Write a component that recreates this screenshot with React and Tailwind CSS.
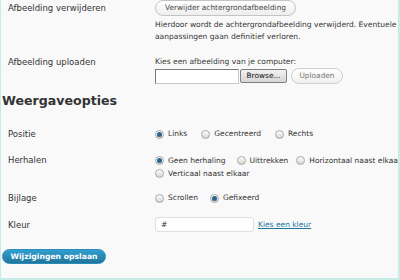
import React from "react";

function Radio({ checked }) {
  return (
    <span className="relative inline-flex h-[9px] w-[9px] shrink-0 items-center justify-center rounded-full border border-[#a8a8a8] bg-gradient-to-b from-[#ffffff] to-[#d4d4d4]">
      {checked && <span className="h-[5px] w-[5px] rounded-full bg-[#2a6491]" />}
    </span>
  );
}

function Opt({ checked, label, className = "" }) {
  return (
    <span className={"inline-flex shrink-0 items-center gap-[4px] " + className}>
      <Radio checked={checked} />
      <span>{label}</span>
    </span>
  );
}

export default function App() {
  return (
    <div className="relative h-[280px] w-[400px] overflow-hidden whitespace-nowrap border-b-2 border-l border-r-2 border-[#c6ece6] bg-[#f9f9f9] font-['DejaVu_Sans',sans-serif] text-[#333]">
      {/* Row: Afbeelding verwijderen */}
      <div className="flex">
        <div className="w-[154px] shrink-0 pl-[7px] text-[8.5px] leading-[16px]">Afbeelding verwijderen</div>
        <div className="flex flex-col items-start">
          <div className="flex h-[16px] w-[141px] items-center justify-center rounded-full border border-[#c4c4c4] bg-gradient-to-b from-[#ffffff] to-[#eeeeee] text-[7.4px] text-[#464646]">
            Verwijder achtergrondafbeelding
          </div>
          <div className="mt-[3px] text-[7.55px] leading-[12px]">
            Hierdoor wordt de achtergrondafbeelding verwijderd. Eventuele
            <br />
            aanpassingen gaan definitief verloren.
          </div>
        </div>
      </div>

      {/* Row: Afbeelding uploaden */}
      <div className="mt-[13px] flex">
        <div className="w-[154px] shrink-0 pl-[7px] text-[8.5px] leading-[12px]">Afbeelding uploaden</div>
        <div className="flex flex-col items-start">
          <div className="text-[7.55px] leading-[12px]">Kies een afbeelding van je computer:</div>
          <div className="flex items-center">
            <div className="h-[15px] w-[84px] border border-t-[#7b7b7b] border-l-[#7b7b7b] border-b-[#c8c8c8] border-r-[#c8c8c8] bg-white" />
            <div className="ml-[1px] flex h-[14px] w-[47px] items-center justify-center rounded-[2px] border border-[#7f7f7f] bg-gradient-to-b from-[#f2f2f2] to-[#d6d6d6] text-[7.4px] text-[#111]">
              Browse...
            </div>
            <div className="ml-[4px] flex h-[16px] w-[52px] items-center justify-center rounded-full border border-[#cfcfcf] bg-gradient-to-b from-[#ffffff] to-[#f0f0f0] text-[7.4px] text-[#777]">
              Uploaden
            </div>
          </div>
        </div>
      </div>

      {/* Heading */}
      <div className="mt-[9px] pl-[1px] text-[12.6px] font-bold leading-[16px] text-[#333]">Weergaveopties</div>

      {/* Positie */}
      <div className="mt-[19px] flex">
        <div className="w-[154px] shrink-0 pl-[7px] text-[8.5px] leading-[12px]">Positie</div>
        <div className="flex h-[12px] items-center text-[7.5px]">
          <Opt checked label="Links" />
          <Opt label="Gecentreerd" className="ml-[14px]" />
          <Opt label="Rechts" className="ml-[14px]" />
        </div>
      </div>

      {/* Herhalen */}
      <div className="mt-[14px] flex">
        <div className="w-[154px] shrink-0 pl-[7px] text-[8.5px] leading-[13px]">Herhalen</div>
        <div className="flex flex-col text-[7.5px]">
          <div className="flex h-[13px] items-center">
            <Opt checked label="Geen herhaling" />
            <Opt label="Uittrekken" className="ml-[11px]" />
            <Opt label="Horizontaal naast elkaar" className="ml-[8px]" />
          </div>
          <div className="flex h-[13px] items-center">
            <Opt label="Verticaal naast elkaar" />
          </div>
        </div>
      </div>

      {/* Bijlage */}
      <div className="mt-[12px] flex">
        <div className="w-[154px] shrink-0 pl-[7px] text-[8.5px] leading-[12px]">Bijlage</div>
        <div className="flex h-[12px] items-center text-[7.5px]">
          <Opt label="Scrollen" />
          <Opt checked label="Gefixeerd" className="ml-[12px]" />
        </div>
      </div>

      {/* Kleur */}
      <div className="mt-[13px] flex items-center">
        <div className="w-[154px] shrink-0 pl-[7px] text-[8.5px] leading-[14px]">Kleur</div>
        <div className="flex h-[15px] w-[99px] shrink-0 items-center rounded-[3px] border border-[#dfdfdf] bg-white pl-[5px] text-[7.5px] text-[#333]">
          #
        </div>
        <span className="ml-[4px] text-[7.5px] text-[#21759b] underline">Kies een kleur</span>
      </div>

      {/* Save */}
      <div className="ml-[1px] mt-[17px] flex h-[15px] w-[104px] items-center justify-center rounded-full border border-[#298cba] bg-gradient-to-b from-[#2e9fd2] to-[#21759b] text-[7.7px] font-bold text-white">
        Wijzigingen opslaan
      </div>
    </div>
  );
}
